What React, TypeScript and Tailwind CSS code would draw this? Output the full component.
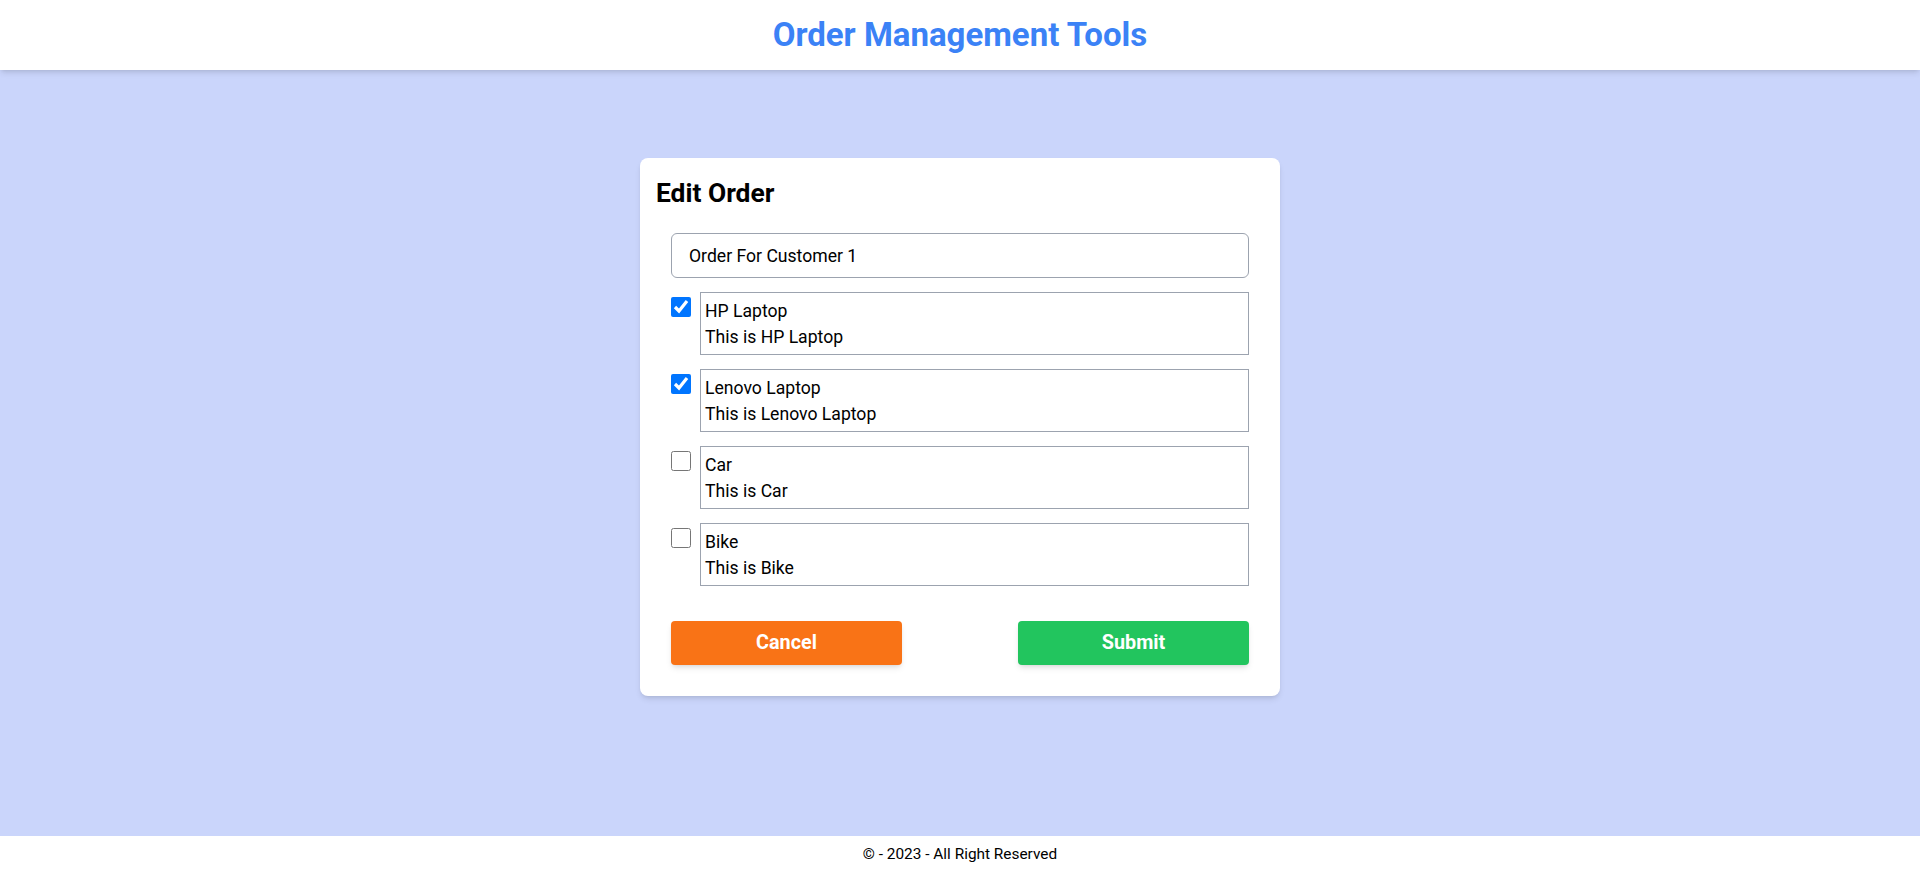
import React from "react";

const items = [
  { name: "HP Laptop", desc: "This is HP Laptop", checked: true },
  { name: "Lenovo Laptop", desc: "This is Lenovo Laptop", checked: true },
  { name: "Car", desc: "This is Car", checked: false },
  { name: "Bike", desc: "This is Bike", checked: false },
];

export default function App() {
  return (
    <div
      className="min-h-screen flex flex-col bg-[#cad5fb]"
      style={{ fontFamily: "Roboto, 'Noto Sans', sans-serif" }}
    >
      <header className="relative z-10 bg-white h-[70px] flex items-center justify-center shadow-md">
        <h1 className="text-[33px] leading-[40px] font-bold text-[#3b82f6]">Order Management Tools</h1>
      </header>
      <main className="flex-1 flex justify-center items-start pt-[88px]">
        <div className="w-[640px] bg-white rounded-lg shadow-md p-4">
          <h2 className="text-[26.4px] font-bold text-black leading-[38px]">Edit Order</h2>
          <form className="px-[15px] pb-[15px] mt-[21px]">
            <input
              type="text"
              defaultValue="Order For Customer 1"
              className="w-full h-[45px] border border-[#9ca3af] rounded-md px-[17px] text-[17.6px] text-black outline-none"
            />
            <div className="flex flex-col gap-[14px] mt-[14px]">
              {items.map((it) => (
                <div key={it.name} className="flex items-start gap-[9px]">
                  <input
                    type="checkbox"
                    defaultChecked={it.checked}
                    className="w-5 h-5 mt-[5px] shrink-0"
                  />
                  <div className="flex-1 h-[63px] border border-[#9ca3af] px-1 pt-[5px] text-[17.6px] leading-[26px] text-black">
                    <div>{it.name}</div>
                    <div>{it.desc}</div>
                  </div>
                </div>
              ))}
            </div>
            <div className="flex justify-between mt-[35px]">
              <button
                type="button"
                className="w-[231px] h-[44px] rounded bg-[#f97316] text-white text-[19.8px] font-bold shadow-md"
              >
                Cancel
              </button>
              <button
                type="button"
                className="w-[231px] h-[44px] rounded bg-[#22c55e] text-white text-[19.8px] font-bold shadow-md"
              >
                Submit
              </button>
            </div>
          </form>
        </div>
      </main>
      <footer className="bg-white h-[36px] pt-[2px] flex items-center justify-center text-[15.4px] text-black">
        © - 2023 - All Right Reserved
      </footer>
    </div>
  );
}
